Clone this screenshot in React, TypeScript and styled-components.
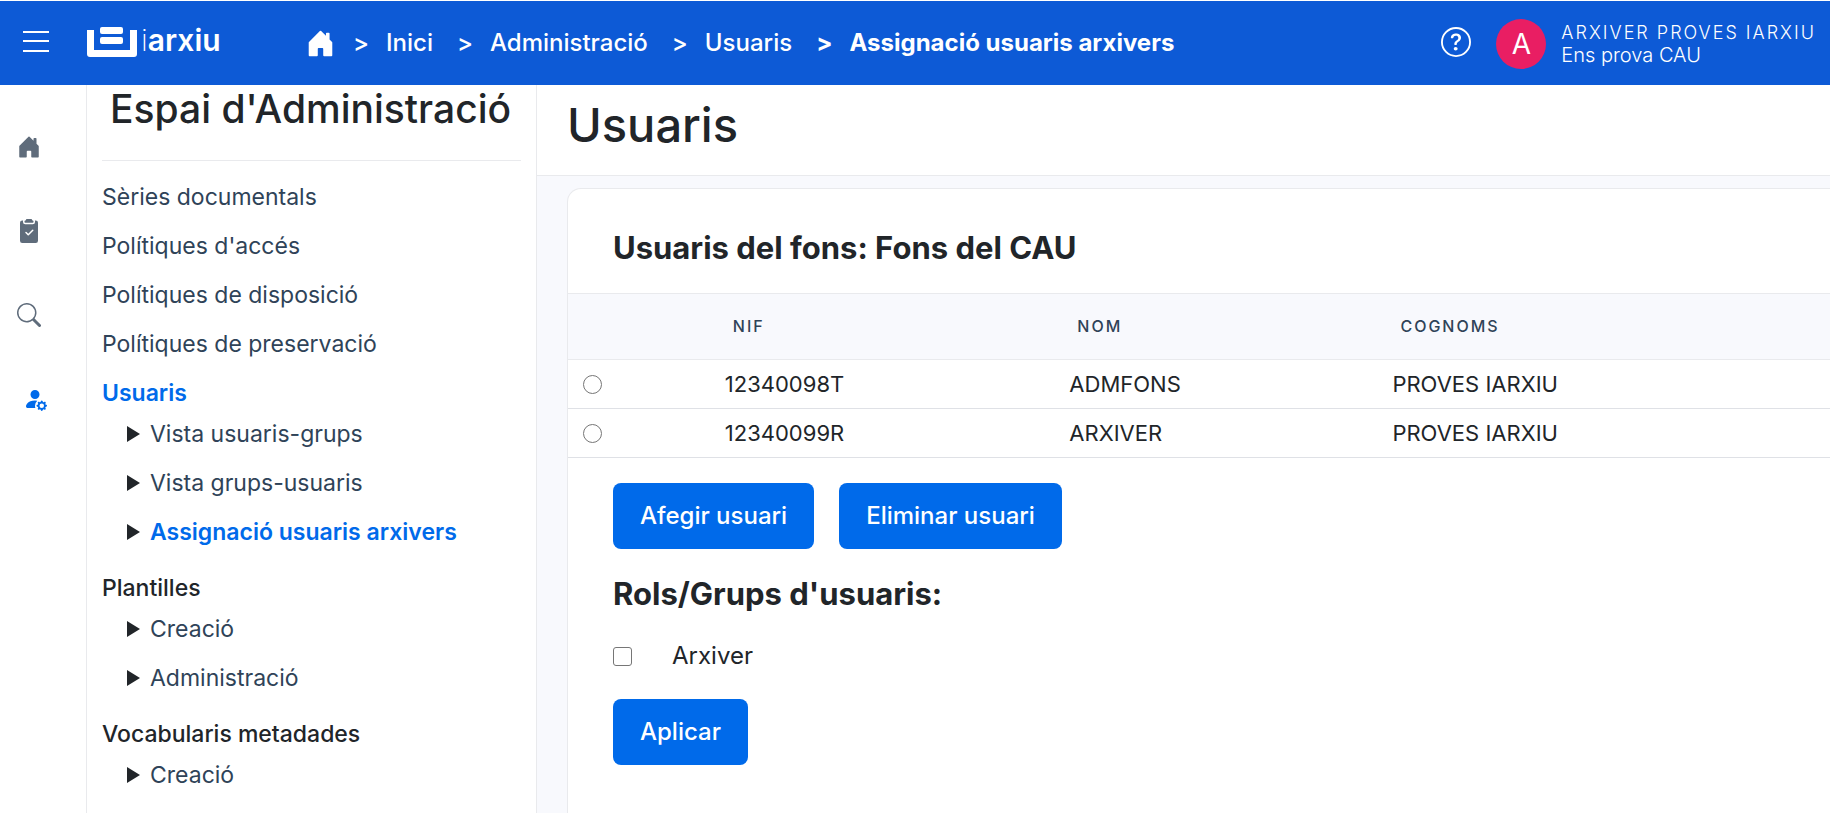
import React from "react";
import styled, { createGlobalStyle } from "styled-components";
import {
  BsHouseDoorFill,
  BsClipboard2CheckFill,
  BsSearch,
  BsPersonFillGear,
  BsQuestionCircle,
} from "react-icons/bs";

const blue = "#006aea";
const line = "#e9eaed";
const ink = "#212529";
const slate = "#2f4358";

const GlobalStyle = createGlobalStyle`
  *, *::before, *::after { box-sizing: border-box; }
  body {
    margin: 0;
    background: #fff;
    color: ${ink};
    font-family: Inter, "Liberation Sans", sans-serif;
    font-size: 22px;
    line-height: 32px;
  }
  a { color: inherit; text-decoration: none; }
  h1, h2, h3, ul, ol, p { margin: 0; padding: 0; }
  ul, ol { list-style: none; }
  button, input { font: inherit; }
`;

const Page = styled.div`
  display: flex;
  flex-direction: column;
  height: 100vh;
  padding-top: 1px;
  overflow: hidden;
`;

const TopBar = styled.header`
  display: flex;
  flex: none;
  align-items: center;
  height: 84px;
  padding: 0 14px 2px 20px;
  background: #0d5ad6;
  color: #fff;
`;

const IconButton = styled.button`
  display: flex;
  padding: 0;
  border: 0;
  background: none;
  color: inherit;
  cursor: pointer;
`;

const Brand = styled.a`
  display: flex;
  align-items: flex-start;
  gap: 4px;
  width: 176px;
  margin-left: 35px;
  font-size: 30px;
  line-height: 26px;
  font-weight: 600;
`;

const ThinLetter = styled.span`
  font-weight: 200;
`;

const Crumbs = styled.ol`
  display: flex;
  flex: 1;
  align-items: center;
  margin-left: 43px;
  padding-top: 2px;
  font-size: 24px;
`;

const Crumb = styled.li<{ $current?: boolean }>`
  display: flex;
  align-items: center;
  font-weight: ${(p) => (p.$current ? 700 : 500)};
  white-space: nowrap;
  &:not(:first-child)::before {
    content: ">";
    margin: 0 17px 0 24px;
  }
  &:nth-child(2)::before {
    margin-left: 18px;
  }
`;

const HomeLink = styled.a`
  display: flex;
`;

const Account = styled.div`
  display: flex;
  align-items: center;
  gap: 15px;
  margin-left: 25px;
  padding-top: 4px;
`;

const Avatar = styled.span`
  display: grid;
  place-items: center;
  width: 50px;
  height: 50px;
  border-radius: 50%;
  background: #e91e63;
  font-size: 28px;
`;

const AccountText = styled.p`
  font-size: 20px;
  line-height: 23px;
  font-weight: 300;
`;

const AccountName = styled.span`
  display: block;
  font-size: 18px;
  letter-spacing: 2px;
`;

const Body = styled.div`
  display: flex;
  flex: 1;
  min-height: 0;
`;

const Rail = styled.nav`
  flex: none;
  width: 87px;
  padding: 50px 0 0 17px;
  border-right: 1px solid ${line};
  color: #5f6c7b;
`;

const RailList = styled.ul`
  display: flex;
  flex-direction: column;
  gap: 60px;
`;

const RailItem = styled.li<{ $active?: boolean }>`
  height: 24px;
  padding-left: ${(p) => (p.$active ? "6px" : "0")};
  color: ${(p) => (p.$active ? blue : "inherit")};
  a { display: flex; }
`;

const SideMenu = styled.nav`
  flex: none;
  width: 450px;
  padding: 0 15px;
  border-right: 1px solid ${line};
  overflow: hidden;
  font-size: 23px;
`;

const SideTitle = styled.h2`
  padding: 3px 8px 31px;
  border-bottom: 1px solid ${line};
  font-size: 39px;
  line-height: 41px;
  font-weight: 500;
  white-space: nowrap;
`;

const MenuList = styled.ul`
  padding-top: 19px;
`;

const MenuItem = styled.li`
  padding: 1px 0 16px;
  color: ${slate};
`;

const GroupLabel = styled.a<{ $active?: boolean }>`
  color: ${(p) => (p.$active ? blue : ink)};
  font-weight: ${(p) => (p.$active ? 600 : 500)};
`;

const SubList = styled.ul`
  padding: 8px 0 0 25px;
  margin-bottom: -9px;
`;

const SubItem = styled.li<{ $active?: boolean }>`
  display: flex;
  align-items: center;
  gap: 10px;
  padding: 1px 0 16px;
  font-weight: ${(p) => (p.$active ? 600 : 400)};
  color: ${(p) => (p.$active ? blue : slate)};
  &::before {
    content: "";
    border: solid transparent;
    border-width: 8px 0 8px 13px;
    border-left-color: ${ink};
  }
`;

const Main = styled.main`
  display: flex;
  flex: 1;
  flex-direction: column;
  min-width: 0;
  background: #f8f9fd;
`;

const PageTitle = styled.h1`
  padding: 18px 30px 29px;
  border-bottom: 1px solid ${line};
  background: #fff;
  font-size: 47px;
  line-height: 43px;
  font-weight: 500;
`;

const Card = styled.section`
  flex: 1;
  margin: 12px 0 0 30px;
  border: 1px solid ${line};
  border-width: 1px 0 0 1px;
  border-radius: 14px 0 0 0;
  background: #fff;
`;

const CardTitle = styled.h2`
  padding: 45px 45px 31px;
  font-size: 31px;
  line-height: 28px;
  font-weight: 700;
`;

const UserTable = styled.table`
  width: 100%;
  table-layout: fixed;
  border-collapse: collapse;
  text-align: left;
`;

const HeadCell = styled.th`
  height: 66px;
  padding: 0 26px 2px;
  border: solid ${line};
  border-width: 1px 0;
  background: #f8f9fd;
  color: ${slate};
  font-size: 16px;
  font-weight: 500;
  letter-spacing: 2px;
`;

const Cell = styled.td`
  height: 49px;
  padding: 0 18px 1px;
  border-bottom: 1px solid #dfe1e6;
`;

const PickCell = styled(Cell)`
  padding: 0 15px;
`;

const Choice = styled.input`
  appearance: none;
  display: block;
  width: 19px;
  height: 19px;
  margin: 0;
  border: 1px solid #767676;
  border-radius: ${(p) => (p.type === "radio" ? "50%" : "3px")};
  background: #fff;
  &:checked {
    background: ${blue};
    box-shadow: inset 0 0 0 3px #fff;
  }
`;

const Actions = styled.div`
  padding: 25px 45px;
`;

const ButtonRow = styled.div`
  display: flex;
  gap: 25px;
`;

const Button = styled.button`
  height: 66px;
  padding: 0 27px;
  border: 0;
  border-radius: 8px;
  background: ${blue};
  color: #fff;
  font-size: 24px;
  font-weight: 500;
  cursor: pointer;
`;

const RolesTitle = styled.h2`
  margin: 31px 0 32px;
  font-size: 31px;
  line-height: 28px;
  font-weight: 700;
`;

const RoleLabel = styled.label`
  display: flex;
  align-items: center;
  gap: 40px;
  margin-bottom: 27px;
  font-size: 24px;
`;

const users = [
  { nif: "12340098T", nom: "ADMFONS", cognoms: "PROVES IARXIU" },
  { nif: "12340099R", nom: "ARXIVER", cognoms: "PROVES IARXIU" },
];

const links = [
  "Sèries documentals",
  "Polítiques d'accés",
  "Polítiques de disposició",
  "Polítiques de preservació",
];

const groups = [
  {
    label: "Usuaris",
    active: true,
    items: ["Vista usuaris-grups", "Vista grups-usuaris", "Assignació usuaris arxivers"],
  },
  { label: "Plantilles", items: ["Creació", "Administració"] },
  { label: "Vocabularis metadades", items: ["Creació"] },
];

const current = "Assignació usuaris arxivers";

export default function App() {
  return (
    <Page>
      <GlobalStyle />
      <TopBar>
        <IconButton aria-label="Menú">
          <svg width="32" height="32" viewBox="0 0 32 32" fill="none" stroke="currentColor" strokeWidth="2">
            <path d="M3 6h26M3 15h26M3 25h26" />
          </svg>
        </IconButton>
        <Brand href="#">
          <svg width="50" height="30" viewBox="0 0 50 30" fill="currentColor">
            <path d="M0 3h7v20h36V3h7v24a3 3 0 0 1-3 3H3a3 3 0 0 1-3-3z" />
            <rect x="13" y="0" width="23" height="7" rx="2" />
            <rect x="13" y="10" width="23" height="7" rx="2" />
          </svg>
          <span><ThinLetter>i</ThinLetter>arxiu</span>
        </Brand>
        <Crumbs>
          <Crumb>
            <HomeLink href="#" aria-label="Portada"><BsHouseDoorFill size={29} /></HomeLink>
          </Crumb>
          <Crumb><a href="#">Inici</a></Crumb>
          <Crumb><a href="#">Administració</a></Crumb>
          <Crumb><a href="#">Usuaris</a></Crumb>
          <Crumb $current aria-current="page">{current}</Crumb>
        </Crumbs>
        <IconButton aria-label="Ajuda"><BsQuestionCircle size={30} /></IconButton>
        <Account>
          <Avatar>A</Avatar>
          <AccountText>
            <AccountName>ARXIVER PROVES IARXIU</AccountName>
            Ens prova CAU
          </AccountText>
        </Account>
      </TopBar>
      <Body>
        <Rail>
          <RailList>
            <RailItem><a href="#" aria-label="Inici"><BsHouseDoorFill size={24} /></a></RailItem>
            <RailItem><a href="#" aria-label="Tasques"><BsClipboard2CheckFill size={24} /></a></RailItem>
            <RailItem><a href="#" aria-label="Cerca"><BsSearch size={24} /></a></RailItem>
            <RailItem $active><a href="#" aria-label="Administració"><BsPersonFillGear size={24} /></a></RailItem>
          </RailList>
        </Rail>
        <SideMenu>
          <SideTitle>Espai d'Administració</SideTitle>
          <MenuList>
            {links.map((text) => (
              <MenuItem key={text}><a href="#">{text}</a></MenuItem>
            ))}
            {groups.map((group) => (
              <MenuItem key={group.label}>
                <GroupLabel href="#" $active={group.active}>{group.label}</GroupLabel>
                <SubList>
                  {group.items.map((item) => (
                    <SubItem key={item} $active={item === current}><a href="#">{item}</a></SubItem>
                  ))}
                </SubList>
              </MenuItem>
            ))}
          </MenuList>
        </SideMenu>
        <Main>
          <PageTitle>Usuaris</PageTitle>
          <Card>
            <CardTitle>Usuaris del fons: Fons del CAU</CardTitle>
            <UserTable>
              <colgroup>
                <col width="11%" />
                <col width="27.3%" />
                <col width="25.6%" />
                <col />
              </colgroup>
              <thead>
                <tr>
                  <HeadCell aria-label="Selecció" />
                  <HeadCell>NIF</HeadCell>
                  <HeadCell>NOM</HeadCell>
                  <HeadCell>COGNOMS</HeadCell>
                </tr>
              </thead>
              <tbody>
                {users.map((user) => (
                  <tr key={user.nif}>
                    <PickCell><Choice type="radio" name="user" aria-label={user.nif} /></PickCell>
                    <Cell>{user.nif}</Cell>
                    <Cell>{user.nom}</Cell>
                    <Cell>{user.cognoms}</Cell>
                  </tr>
                ))}
              </tbody>
            </UserTable>
            <Actions>
              <ButtonRow>
                <Button>Afegir usuari</Button>
                <Button>Eliminar usuari</Button>
              </ButtonRow>
              <RolesTitle>Rols/Grups d'usuaris:</RolesTitle>
              <RoleLabel><Choice type="checkbox" />Arxiver</RoleLabel>
              <Button>Aplicar</Button>
            </Actions>
          </Card>
        </Main>
      </Body>
    </Page>
  );
}
